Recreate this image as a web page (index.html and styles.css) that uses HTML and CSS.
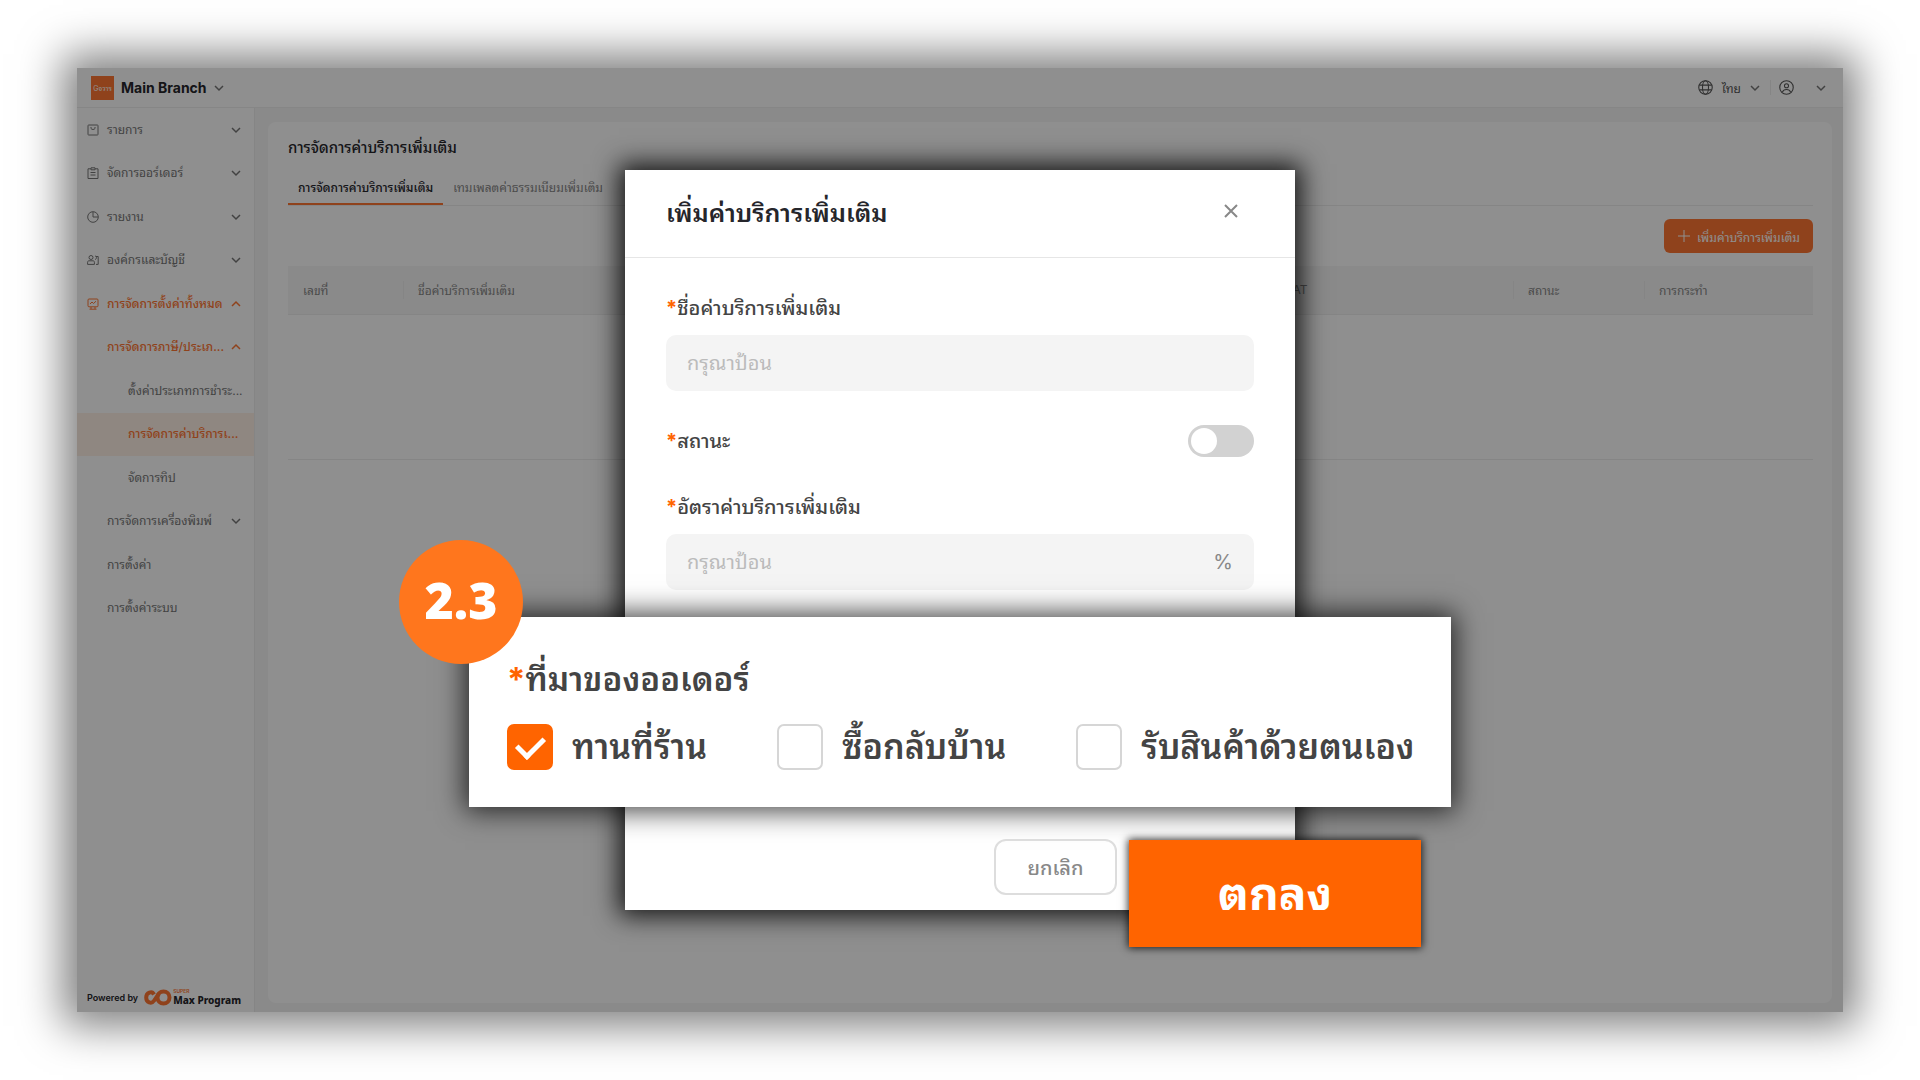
FILE: index.html
```html
<!DOCTYPE html>
<html lang="th">
<head>
<meta charset="utf-8">
<meta name="viewport" content="width=device-width, initial-scale=1">
<title>การจัดการค่าบริการเพิ่มเติม</title>
<link rel="stylesheet" href="styles.css">
</head>
<body>
<svg class="sprite" aria-hidden="true">
  <symbol id="down" viewBox="0 0 10 10"><path d="M1 3l4 4 4-4"/></symbol>
  <symbol id="up" viewBox="0 0 10 10"><path d="M1 7l4-4 4 4"/></symbol>
</svg>

<div class="app">
  <header class="topbar">
    <button class="branch" type="button">
      <span class="logo">Gจวาร</span>
      <span>Main Branch</span>
      <svg class="chev"><use href="#down"/></svg>
    </button>
    <div class="tools">
      <button class="tool" type="button">
        <svg class="tool-icon" viewBox="0 0 14 14"><circle cx="7" cy="7" r="6.3"/><ellipse cx="7" cy="7" rx="2.8" ry="6.3"/><path d="M1.3 4.8h11.4M1.3 9.2h11.4"/></svg>
        <span>ไทย</span>
        <svg class="chev"><use href="#down"/></svg>
      </button>
      <button class="tool account" type="button" aria-label="บัญชี">
        <svg class="tool-icon" viewBox="0 0 14 14"><circle cx="7" cy="7" r="6.3"/><circle cx="7" cy="5.4" r="1.9"/><path d="M3.2 11.2c.6-1.8 2-2.4 3.8-2.4s3.2.6 3.8 2.4"/></svg>
        <svg class="chev"><use href="#down"/></svg>
      </button>
    </div>
  </header>

  <div class="columns">
    <aside class="sidebar">
      <nav class="menu">
        <a class="item" href="#"><svg class="item-icon" viewBox="0 0 12 12"><rect x="1" y="1" width="10" height="10" rx=".6"/><path d="M4 3v1.500c.8 1.300 3.200 1.300 4 0V3"/></svg><span class="text">รายการ</span><svg class="chev"><use href="#down"/></svg></a>
        <a class="item" href="#"><svg class="item-icon" viewBox="0 0 12 12"><path d="M4 1.800H1v9.700h10V1.800H8M4 .8h4v2H4zM3.500 5.500h5M3.500 8h5"/></svg><span class="text">จัดการออร์เดอร์</span><svg class="chev"><use href="#down"/></svg></a>
        <a class="item" href="#"><svg class="item-icon" viewBox="0 0 12 12"><circle cx="6" cy="6" r="5.3"/><path d="M6 1v5h5"/></svg><span class="text">รายงาน</span><svg class="chev"><use href="#down"/></svg></a>
        <a class="item" href="#"><svg class="item-icon" viewBox="0 0 12 12"><circle cx="4" cy="3.5" r="2"/><path d="M.6 10.400V8.200c0-1 .6-1.400 1.400-1.400h4c.8 0 1.400.4 1.400 1.400v2.200zM8 2c2 .4 2 3 0 3.500M9 2.500h2.200v7.900H9"/></svg><span class="text">องค์กรและบัญชี</span><svg class="chev"><use href="#down"/></svg></a>
        <a class="item open" href="#"><svg class="item-icon" viewBox="0 0 12 12"><rect x="1" y="1" width="10" height="7.8" rx="1"/><path d="M3 6l2-2 1.500 1.500L9 3.200M2.500 11.200h7M4 9v2M8 9v2"/></svg><span class="text">การจัดการตั้งค่าทั้งหมด</span><svg class="chev"><use href="#up"/></svg></a>
        <a class="item level-1 open" href="#"><span class="text">การจัดการภาษี/ประเภ...</span><svg class="chev"><use href="#up"/></svg></a>
        <a class="item level-2" href="#"><span class="text">ตั้งค่าประเภทการชำระ...</span></a>
        <a class="item level-2 active" href="#"><span class="text">การจัดการค่าบริการเ...</span></a>
        <a class="item level-2" href="#"><span class="text">จัดการทิป</span></a>
        <a class="item level-1" href="#"><span class="text">การจัดการเครื่องพิมพ์</span><svg class="chev"><use href="#down"/></svg></a>
        <a class="item level-1" href="#"><span class="text">การตั้งค่า</span></a>
        <a class="item level-1" href="#"><span class="text">การตั้งค่าระบบ</span></a>
      </nav>
      <div class="powered">
        <span>Powered by</span>
        <svg class="mark" viewBox="0 0 28 17"><path d="M10 5.500C8 1.500 2.200 3.500 2.200 8.500s5.300 7 8 3L15 4.500"/><circle cx="19.500" cy="8.500" r="6"/></svg>
        <span class="brand"><small>SUPER</small><b>Max Program</b></span>
      </div>
    </aside>

    <main class="page">
      <section class="card">
        <h1>การจัดการค่าบริการเพิ่มเติม</h1>
        <div class="tabs">
          <a class="tab current" href="#">การจัดการค่าบริการเพิ่มเติม</a>
          <a class="tab" href="#">เทมเพลตค่าธรรมเนียมเพิ่มเติม</a>
        </div>
        <div class="actions">
          <button class="add" type="button"><svg viewBox="0 0 14 14"><path d="M7 1v12M1 7h12"/></svg>เพิ่มค่าบริการเพิ่มเติม</button>
        </div>
        <table class="fees">
          <colgroup><col class="c-no"><col class="c-name"><col class="c-vat"><col class="c-status"><col class="c-act"></colgroup>
          <thead><tr><th>เลขที่</th><th>ชื่อค่าบริการเพิ่มเติม</th><th>VAT</th><th>สถานะ</th><th>การกระทำ</th></tr></thead>
          <tbody><tr><td colspan="5"></td></tr></tbody>
        </table>
      </section>
    </main>
  </div>
</div>

<div class="overlay">
  <form class="modal">
    <header class="modal-head">
      <h2>เพิ่มค่าบริการเพิ่มเติม</h2>
      <button class="close" type="button" aria-label="ปิด"><svg viewBox="0 0 14 14"><path d="M1 1l12 12M13 1L1 13"/></svg></button>
    </header>
    <div class="fields">
      <div class="field">
        <label for="name"><i>*</i>ชื่อค่าบริการเพิ่มเติม</label>
        <input id="name" class="box" type="text" placeholder="กรุณาป้อน">
      </div>
      <div class="field inline">
        <label for="status"><i>*</i>สถานะ</label>
        <input id="status" class="switch" type="checkbox" role="switch">
      </div>
      <div class="field">
        <label for="rate"><i>*</i>อัตราค่าบริการเพิ่มเติม</label>
        <div class="box with-unit"><input id="rate" type="text" placeholder="กรุณาป้อน"><span>%</span></div>
      </div>
    </div>
    <div class="source" role="group" aria-labelledby="source-title">
      <span class="step">2.3</span>
      <div class="source-title" id="source-title"><i>*</i>ที่มาของออเดอร์</div>
      <div class="options">
        <label><input type="checkbox" checked>ทานที่ร้าน</label>
        <label><input type="checkbox">ซื้อกลับบ้าน</label>
        <label><input type="checkbox">รับสินค้าด้วยตนเอง</label>
      </div>
    </div>
    <footer class="modal-foot">
      <button class="cancel" type="button">ยกเลิก</button>
      <button class="ok" type="submit">ตกลง</button>
    </footer>
  </form>
</div>
</body>
</html>
```
FILE: styles.css
```css
* { box-sizing: border-box; }

body {
  margin: 0;
  padding: 68px 77px;
  background: #fff;
  color: #26262b;
  font-family: Inter, "Noto Sans Thai Looped", "Noto Looped Thai", Loma, Garuda, Umpush, Waree, "Noto Sans Thai", "Noto Sans", sans-serif;
  font-size: 12px;
}

button, input { font: inherit; color: inherit; }
button { border: 0; background: none; padding: 0; }
a { color: inherit; text-decoration: none; }
i { font-style: normal; font-weight: 700; color: #ff6400; }
svg { fill: none; stroke: currentColor; flex: none; }
.sprite { position: absolute; width: 0; height: 0; }
.chev { width: 10px; height: 10px; stroke-width: 1.5; color: #777; }

/* Dimmed application */
.app {
  position: relative;
  display: flex;
  flex-direction: column;
  min-height: calc(100vh - 136px);
  background: #fff;
  box-shadow: 0 0 40px 14px rgba(0, 0, 0, .5);
}
.app::after {
  content: "";
  position: absolute;
  inset: 0;
  background: rgba(0, 0, 0, .44);
}

.topbar {
  display: flex;
  align-items: center;
  justify-content: space-between;
  height: 40px;
  padding: 0 17px 0 14px;
  border-bottom: 1px solid #efefef;
}
.branch, .tool { display: flex; align-items: center; gap: 7px; }
.branch { font-size: 14px; font-weight: 700; }
.logo {
  display: grid;
  place-items: center;
  width: 23px;
  height: 24px;
  background: #ff7733;
  color: #fff;
  font-size: 7px;
  font-weight: 400;
}
.tools { display: flex; align-items: center; color: #555; }
.tool { gap: 9px; }
.tool-icon { width: 15px; height: 15px; }
.tool + .tool { margin-left: 10px; padding-left: 8px; border-left: 1px solid #eee; }
.tool.account { gap: 22px; }

.columns { display: flex; flex: 1; }
.sidebar {
  display: flex;
  flex-direction: column;
  justify-content: space-between;
  flex: none;
  width: 178px;
  border-right: 1px solid #eee;
}
.menu { display: grid; grid-template-columns: minmax(0, 1fr); grid-auto-rows: 1fr; height: 522px; }
.item {
  display: flex;
  align-items: center;
  gap: 8px;
  padding: 0 13px 0 10px;
  color: #777;
  font-weight: 400;
}
.item-icon { width: 12px; height: 12px; }
.text { flex: 1; min-width: 0; white-space: nowrap; line-height: 24px; }
.level-1 { padding-left: 30px; }
.level-2 { padding-left: 51px; }
.open, .active, .open .chev { color: #ff7733; }
.open, .active { font-weight: 500; }
.active { background: #fff0e6; }

.powered {
  display: flex;
  align-items: center;
  gap: 6px;
  padding: 0 10px 6px;
  font-size: 9px;
  font-weight: 600;
}
.mark { width: 28px; height: 17px; stroke: #ff7733; stroke-width: 4; }
.brand { display: flex; flex-direction: column; margin-left: -5px; line-height: 12px; }
.brand small { color: #ff7733; font-size: 5px; line-height: 5px; }
.brand b { font: 800 10px/12px "Noto Sans", sans-serif; white-space: nowrap; }

.page { display: flex; flex: 1; min-width: 0; padding: 14px 11px 9px 13px; background: #f7f7f7; }
.card { flex: 1; min-width: 0; padding: 14px 19px 14px 20px; border-radius: 8px; background: #fff; }
h1 { margin: 0; font-size: 15px; font-weight: 500; line-height: 24px; }
.tabs { display: flex; margin-top: 13px; border-bottom: 1px solid #eee; }
.tab { padding: 0 10px; line-height: 30px; border-bottom: 2px solid transparent; color: #888; }
.current { border-color: #ff7733; color: #26262b; font-weight: 500; }
.actions { display: flex; justify-content: flex-end; padding: 13px 0; }
.add {
  display: flex;
  align-items: center;
  gap: 6px;
  height: 34px;
  padding: 0 13px;
  border-radius: 6px;
  background: #ff7733;
  color: #fff;
  font-weight: 400;
}
.add svg { width: 14px; height: 14px; }
.fees { width: 100%; border-collapse: collapse; table-layout: fixed; }
.fees th { height: 48px; padding: 0 15px; background: #f7f7f7; border-bottom: 1px solid #eee; color: #888; font-weight: 400; text-align: left; }
.fees td { height: 145px; border-bottom: 1px solid #eee; }
.fees th + th { background: linear-gradient(#eee, #eee) 0 center / 1px 18px no-repeat #f7f7f7; }
.c-no { width: 115px; }
.c-name { width: 867px; }
.c-status { width: 131px; }
.c-act { width: 169px; }

/* Dialog */
.overlay { position: absolute; inset: 0; display: flex; align-items: center; justify-content: center; }
.modal { width: 670px; background: #fff; box-shadow: 0 0 24px 6px rgba(0, 0, 0, .85); color: #444; font-size: 20px; }
.modal-head {
  display: flex;
  align-items: center;
  justify-content: space-between;
  height: 88px;
  padding: 0 57px 6px 41px;
  border-bottom: 1px solid #e6e6e6;
  color: #26262b;
}
h2 { margin: 0; font-size: 25px; font-weight: 600; }
.close { display: flex; color: #888; }
.close svg { width: 14px; height: 14px; stroke-width: 2; }
.fields { display: flex; flex-direction: column; gap: 34px; padding: 34px 41px 27px; }
.field { display: flex; flex-direction: column; gap: 11px; font-weight: 500; }
.field label { line-height: 32px; }
.field.inline { flex-direction: row; align-items: center; justify-content: space-between; }
.box { width: 100%; height: 56px; padding: 0 21px; border: 0; border-radius: 10px; background: #f4f4f4; font-weight: 400; }
.with-unit { display: flex; align-items: center; color: #888; }
.with-unit input { flex: 1; min-width: 0; padding: 0; border: 0; background: none; }
::placeholder { color: #bbb; opacity: 1; }
.switch { appearance: none; display: flex; width: 66px; height: 32px; margin: 0; padding: 3px; border-radius: 16px; background: #d2d2d2; }
.switch::before { content: ""; width: 26px; height: 26px; border-radius: 50%; background: #fff; }

.source {
  position: relative;
  margin: 0 -156px;
  height: 190px;
  padding: 38px 38px 0;
  background: #fff;
  box-shadow: 0 0 26px 4px rgba(0, 0, 0, .75);
  font-size: 33px;
  font-weight: 600;
}
.source-title { line-height: 48px; }
.options { display: flex; gap: 70px; margin-top: 21px; font-size: 34px; }
.options label { display: flex; align-items: center; gap: 19px; line-height: 46px; white-space: nowrap; }
.options input { appearance: none; display: grid; place-items: center; width: 46px; height: 46px; margin: 0; border: 2px solid #d6d6d6; border-radius: 7px; background: #fff; }
.options input:checked { border-color: #ff6400; background: #ff6400; }
.options input:checked::before { content: ""; width: 22px; height: 12px; margin-bottom: 6px; border: solid #fff; border-width: 0 0 5px 5px; transform: rotate(-45deg); }
.step {
  position: absolute;
  left: -70px;
  top: -77px;
  display: grid;
  place-items: center;
  width: 124px;
  height: 124px;
  padding-bottom: 4px;
  border-radius: 50%;
  background: #ff761d;
  color: #fff;
  font: 900 50px/60px "Noto Sans", sans-serif;
}

.modal-foot { position: relative; height: 103px; padding: 32px 178px 0 0; display: flex; justify-content: flex-end; }
.cancel { width: 123px; height: 56px; padding-bottom: 2px; border: 2px solid #ddd; border-radius: 12px; color: #888; font-weight: 500; }
.ok {
  position: absolute;
  left: 504px;
  top: 33px;
  width: 292px;
  height: 107px;
  padding-bottom: 10px;
  background: #ff6400;
  box-shadow: 0 0 8px 1px rgba(0, 0, 0, .8);
  color: #fff;
  font-size: 46px;
  font-weight: 700;
}
```
